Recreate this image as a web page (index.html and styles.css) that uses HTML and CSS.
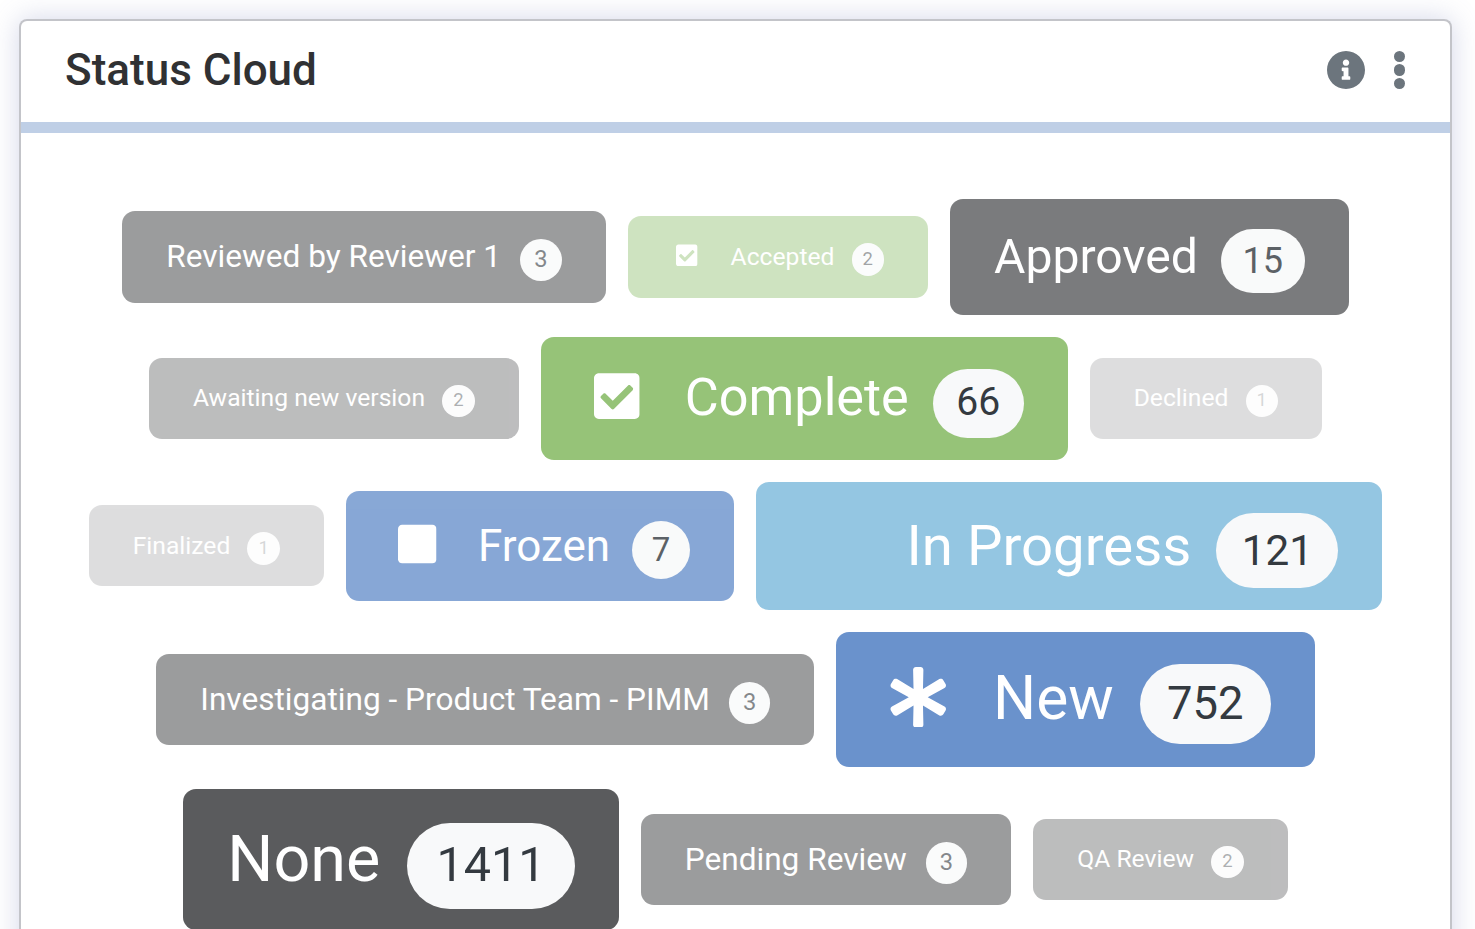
FILE: index.html
```html
<!DOCTYPE html>
<html lang="en">
<head>
<meta charset="UTF-8">
<meta name="viewport" content="width=device-width,initial-scale=1.0">
<title>Status Cloud</title>
<link rel="stylesheet" href="styles.css">
</head>
<body>
<svg class="sprite" aria-hidden="true">
<symbol id="i-check" viewBox="0 0 448 512"><path d="M400 480H48c-26.51 0-48-21.49-48-48V80c0-26.51 21.49-48 48-48h352c26.51 0 48 21.49 48 48v352c0 26.51-21.49 48-48 48zm-204.686-98.059l184-184c6.248-6.248 6.248-16.379 0-22.627l-22.627-22.627c-6.248-6.248-16.379-6.249-22.628 0L184 302.745l-70.059-70.059c-6.248-6.248-16.379-6.248-22.628 0l-22.627 22.627c-6.248 6.248-6.248 16.379 0 22.627l104 104c6.249 6.25 16.379 6.25 22.628.001z"/></symbol>
<symbol id="i-square" viewBox="0 0 448 512"><path d="M400 32H48C21.5 32 0 53.5 0 80v352c0 26.5 21.5 48 48 48h352c26.5 0 48-21.5 48-48V80c0-26.5-21.5-48-48-48z"/></symbol>
<symbol id="i-asterisk" viewBox="0 0 512 512"><path d="M478.21 334.093L336 256l142.21-78.093c11.795-6.477 15.961-21.384 9.232-33.037l-19.48-33.741c-6.728-11.653-21.72-15.499-33.227-8.523L296 186.718l3.475-162.204C299.763 11.061 288.937 0 275.48 0h-38.96c-13.456 0-24.283 11.061-23.994 24.514L216 186.718 77.265 102.607c-11.506-6.976-26.499-3.13-33.227 8.523l-19.48 33.741c-6.728 11.653-2.562 26.56 9.233 33.037L176 256 33.79 334.093c-11.795 6.477-15.961 21.384-9.232 33.037l19.48 33.741c6.728 11.653 21.721 15.499 33.227 8.523L216 325.282l-3.475 162.204C212.237 500.939 223.064 512 236.52 512h38.961c13.456 0 24.283-11.061 23.995-24.514L296 325.282l138.735 84.111c11.506 6.976 26.499 3.13 33.227-8.523l19.48-33.741c6.728-11.653 2.563-26.559-9.232-33.036z"/></symbol>
</svg>
<div class="card">
<div class="card-header">
<h1>Status Cloud</h1>
<div class="actions">
<svg class="info" viewBox="8 8 496 496"><path d="M256 8C119.043 8 8 119.083 8 256c0 136.997 111.043 248 248 248s248-111.003 248-248C504 119.083 392.957 8 256 8zm0 110c23.196 0 42 18.804 42 42s-18.804 42-42 42-42-18.804-42-42 18.804-42 42-42zm56 254c0 6.627-5.373 12-12 12h-88c-6.627 0-12-5.373-12-12v-24c0-6.627 5.373-12 12-12h12v-64h-12c-6.627 0-12-5.373-12-12v-24c0-6.627 5.373-12 12-12h64c6.627 0 12 5.373 12 12v100h12c6.627 0 12 5.373 12 12v24z"/></svg>
<div class="kebab"><span></span><span></span><span></span></div>
</div>
</div>
<div class="cloud">
<div class="tag gray op-60 fs-32">Reviewed by Reviewer 1 <span class="count">3</span></div>
<div class="tag green op-45 fs-26"><span class="icon"><svg><use href="#i-check"/></svg></span> Accepted <span class="count">2</span></div>
<div class="tag gray op-80 fs-48">Approved <span class="count">15</span></div>
<div class="tag gray op-40 fs-26">Awaiting new version <span class="count">2</span></div>
<div class="tag green fs-53"><span class="icon"><svg><use href="#i-check"/></svg></span> Complete <span class="count">66</span></div>
<div class="tag gray op-20 fs-26">Declined <span class="count">1</span></div>
<div class="tag gray op-20 fs-26">Finalized <span class="count">1</span></div>
<div class="tag blue op-80 fs-45"><span class="icon"><svg><use href="#i-square"/></svg></span> Frozen <span class="count">7</span></div>
<div class="tag sky fs-57"><span class="icon"></span> In Progress <span class="count">121</span></div>
<div class="tag gray op-60 fs-32">Investigating - Product Team - PIMM <span class="count">3</span></div>
<div class="tag blue fs-61"><span class="icon"><svg class="wide"><use href="#i-asterisk"/></svg></span> New <span class="count">752</span></div>
<div class="tag gray fs-65">None <span class="count">1411</span></div>
<div class="tag gray op-60 fs-32">Pending Review <span class="count">3</span></div>
<div class="tag gray op-40 fs-26">QA Review <span class="count">2</span></div>
</div>
</div>
</body>
</html>
```

FILE: styles.css
```css
html,body{
height:100%;
}
body{
margin:0;
overflow:hidden;
background:#fff;
font-family:Roboto,"Liberation Sans",sans-serif;
}
.sprite{
display:none;
}
.card{
margin:19px 23px 0 19px;
min-height:1000px;
background:#fff;
border:solid #c3c4c9;
border-width:2px 2px 0 2px;
border-radius:8px 8px 0 0;
box-shadow:0 0 28px rgba(110,120,180,0.3);
}
.card-header{
display:flex;
justify-content:space-between;
align-items:center;
height:98px;
padding:0 45px 3px 44px;
border-bottom:11px solid #bfcfe6;
}
.card-header h1{
margin:0;
font-size:44px;
font-weight:500;
color:#303133;
}
.actions{
display:flex;
align-items:center;
gap:29px;
}
.info{
width:38px;
height:38px;
fill:#6c757d;
}
.kebab{
display:flex;
flex-direction:column;
gap:1.8px;
}
.kebab span{
width:11.5px;
height:11.5px;
border-radius:50%;
background:#6c757d;
}
.cloud{
display:flex;
flex-wrap:wrap;
justify-content:center;
align-items:center;
gap:22px;
padding:66px 40px 0;
}
.tag{
padding:22.3px 44px 21.7px;
border-radius:13px;
color:#fff;
line-height:1.5;
white-space:nowrap;
}
.gray{background:#5a5b5d;}
.green{background:#96c378;}
.blue{background:#6a92cc;}
.sky{background:#94c6e2;}
.op-80{opacity:.8;}
.op-60{opacity:.6;}
.op-45{opacity:.46;}
.op-40{opacity:.4;}
.op-20{opacity:.2;}
.fs-26{font-size:24.65px;}
.fs-32{font-size:31.6px;}
.fs-45{font-size:44px;}
.fs-48{font-size:48.1px;}
.fs-53{font-size:52.2px;}
.fs-57{font-size:56.35px;}
.fs-61{font-size:60.5px;}
.fs-65{font-size:64.7px;}
.count{
display:inline-block;
margin-left:11px;
padding:.3em .6em;
border-radius:10em;
background:#f8f9fa;
color:#343a40;
font-size:75%;
line-height:1.17;
}
.icon{
display:inline-block;
width:1.25em;
margin-right:22px;
text-align:center;
}
.icon svg{
width:.875em;
height:1em;
fill:#fff;
vertical-align:-.125em;
}
.icon svg.wide{
width:1em;
}
```
